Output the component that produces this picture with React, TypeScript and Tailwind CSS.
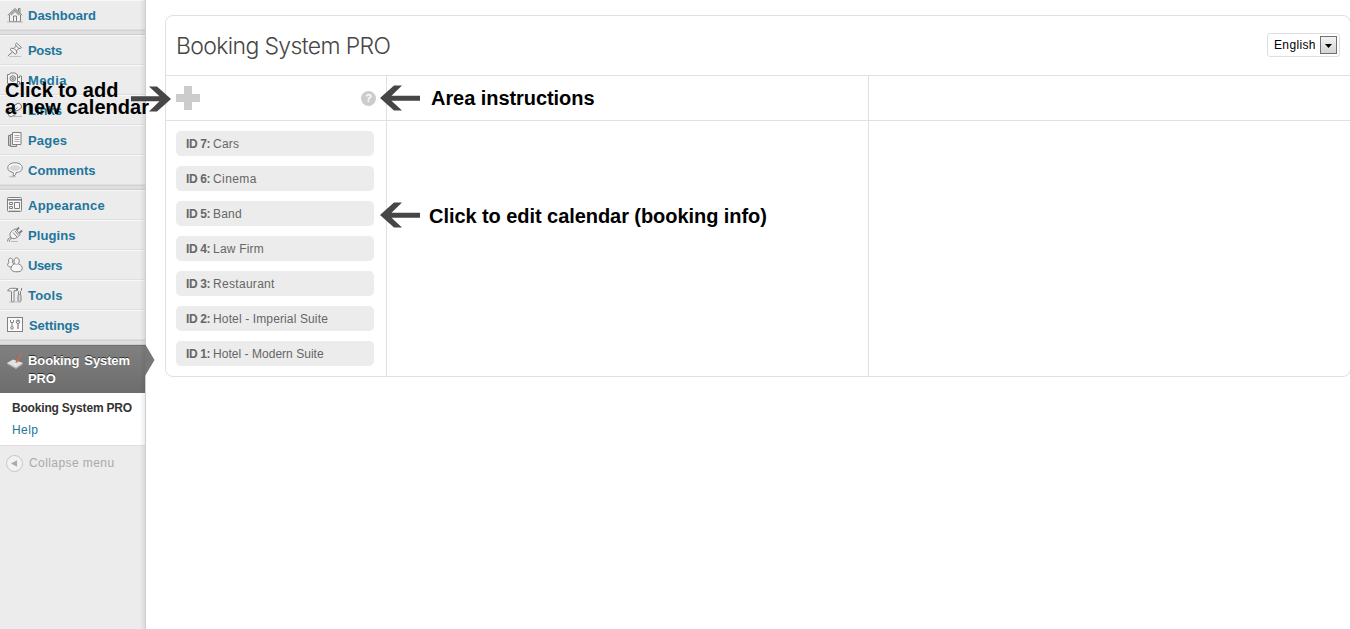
import React from "react";

type IconName =
  | "home" | "pin" | "media" | "links" | "pages" | "comments"
  | "appearance" | "plugins" | "users" | "tools" | "settings";

const icons: Record<IconName, React.ReactNode> = {
  home: (
    <>
      <path d="M2.5 8v6.5h11V8L8 2.8z" fill="#f4f4f4" />
      <path d="M.8 8.3 8 1.5l7.2 6.8M11.5 4V1.500h1.500V6M2.5 8v6.5h11V8M6.500 14V9h3v5M4 8.300l4-3.800 4 3.800" />
      <path d="M0 15h16" stroke="#bbb" />
    </>
  ),
  pin: (
    <>
      <path d="m9.500 1 5 4.500-1.500 1-1.200-.3-2.300 2.600.3 2.200-1.500 1.200L3 7.500l1.500-1.200 2.300.2L9.200 4 8.500 2.500z" fill="#f4f4f4" />
      <path d="m9.200 4 2.600 2.200M6.800 6.500l2.700 2.300M5.500 10 .8 14" />
      <path d="M2 14.500h12" stroke="#c4c4c4" />
    </>
  ),
  media: (
    <>
      <path d="M.5 2.500h2l1-1.500h5l1 1.500h1v9H.5zM10.500 5.500h2V4h2v8h-2V9.500h-2" fill="#f4f4f4" />
      <circle cx="5.800" cy="6.500" r="2.800" fill="#ddd" />
      <circle cx="5.800" cy="6.500" r="1" />
      <path d="M1 12.500h14" stroke="#bbb" />
    </>
  ),
  links: (
    <>
      <rect x="6.500" y="2" width="8" height="6" rx="3" transform="rotate(-35 10.500 5)" fill="#f4f4f4" />
      <rect x="1" y="8" width="8" height="6" rx="3" transform="rotate(-35 5 11)" fill="#f4f4f4" />
      <path d="m5 10.500 5.500-5" />
      <path d="M5 14.500h10" stroke="#bbb" />
    </>
  ),
  pages: (
    <>
      <path d="M1.500 3.500h5v10h-5z" fill="#ccc" />
      <path d="M3.500 2.500h6v12h-6z" fill="#ddd" />
      <path d="M5.500.500h8.500v12H5.500z" fill="#f8f8f8" />
      <path d="M7.500 3.500h5M7.500 5.500h5M7.500 7.500h5M7.500 9.500h5" stroke="#aaa" />
    </>
  ),
  comments: (
    <>
      <path d="M8 .8c4.200 0 7.200 1.900 7.200 5s-2.700 4.500-6.200 4.700c0 1.900-1 3.300-3.500 4 .9-1.200 1.200-2.500.8-4C3 10 .8 8.500.8 5.800c0-3.100 3-5 7.200-5z" fill="#fafafa" />
      <ellipse cx="8" cy="6" rx="5.500" ry="3" fill="#d8d8d8" stroke="none" />
      <path d="M2 14.800h7" stroke="#bbb" />
    </>
  ),
  appearance: (
    <>
      <rect x=".5" y=".5" width="14" height="14" rx="1" fill="#f6f6f6" />
      <path d="M1 2.800h13" strokeWidth="1.600" />
      <path d="M2.500 5.500h3v2h-3zM2.500 9.500h3v2h-3zM7.500 5.500h5v6h-5z" />
      <path d="M2 13.500h11" stroke="#ccc" />
    </>
  ),
  plugins: (
    <>
      <path d="M6.500 3C3.500 4.500 2.200 7 3.500 10c1.700 2.500 5.500 2 7.800-.5L13 7.500 8.300 1.800z" fill="#f4f4f4" />
      <path d="M3.500 10.500c-2 .5-3 2-2.800 4M4.700 11.500c-1.500.3-2.300 1.500-2.200 3M6 5.500l4 4.500M8 4l3.500 4.300" />
      <path d="m9.500 3 2.500-2.500M12.200 6l3-2.500" strokeWidth="1.800" />
      <path d="M4 14.500h7" stroke="#bbb" />
    </>
  ),
  users: (
    <>
      <path d="M3.500 1c2 0 3 2.500 1.800 4.500C8 7 7 10 4.500 10 1.500 10 0 8.500.8 7c.2-.8.700-1.200 1.200-1.500C1 3.500 1.700 1 3.500 1z" fill="#f4f4f4" />
      <path d="M9.500.8c2.800 0 3.500 3.500 1.800 6 2.700 1 4.200 3 3.900 5-.4 2.300-2.700 3-5.200 3-3.500 0-6-1-6-3.200C4 9.500 5.500 7.500 7.800 6.800 6.300 4.500 7 .8 9.500.8z" fill="#f6f6f6" />
      <path d="M7.800 6.800c1 .8 2.500.8 3.500 0" stroke="#aaa" />
    </>
  ),
  tools: (
    <>
      <path d="M.7 4c.5-2 2-2.700 4-2.700h4.800v2.400H7v11H4.500V4.500C3 3.500 1.700 4 .7 4z" fill="#f4f4f4" />
      <path d="M10.500 1v2.500l1 1V7.500M14.500 1v2.500l-1 1V7.500" fill="none" />
      <rect x="11" y="7.500" width="3" height="7" rx="1.200" fill="#ddd" />
      <path d="M2 15h12" stroke="#bbb" />
    </>
  ),
  settings: (
    <>
      <rect x=".5" y=".5" width="15" height="14" fill="#fafafa" />
      <path d="M3.500 3v2M6.500 3v2M3.500 5.500h3M5 5.500V9" />
      <circle cx="5" cy="10.800" r="1.300" />
      <circle cx="11" cy="4.800" r="1.800" />
      <path d="M11 6.800V12M11 3v2" strokeWidth="1.300" />
    </>
  ),
};

function Icon({ name }: { name: IconName }) {
  return (
    <svg width="16" height="16" viewBox="0 0 16 16" fill="none" stroke="#808080" strokeWidth="1" className="shrink-0">
      {icons[name]}
    </svg>
  );
}

type Entry = { icon: IconName; label: string; text: string };

const groups: Entry[][] = [
  [{ icon: "home", label: "Dashboard", text: "tracking-[0px]" }],
  [
    { icon: "pin", label: "Posts", text: "tracking-[-0.3px]" },
    { icon: "media", label: "Media", text: "tracking-[0.4px]" },
    { icon: "links", label: "Links", text: "tracking-[0px]" },
    { icon: "pages", label: "Pages", text: "tracking-[0.2px]" },
    { icon: "comments", label: "Comments", text: "tracking-[0.05px]" },
  ],
  [
    { icon: "appearance", label: "Appearance", text: "tracking-[0.25px]" },
    { icon: "plugins", label: "Plugins", text: "tracking-[0.1px]" },
    { icon: "users", label: "Users", text: "tracking-[-0.4px]" },
    { icon: "tools", label: "Tools", text: "tracking-[0.2px]" },
    { icon: "settings", label: "Settings", text: "tracking-[-0.1px] pl-px" },
  ],
];

function Sidebar() {
  return (
    <aside className="relative flex w-[146px] shrink-0 flex-col border-r border-[#cfcfcf] bg-[#ececec]">
      {groups.map((group, i) => (
        <div key={i}>
          {group.map((entry) => (
            <div
              key={entry.label}
              className="flex h-[30px] items-center gap-[5px] border-t border-b border-t-[#f9f9f9] border-b-[#dfdfdf] pl-[7px]"
            >
              <Icon name={entry.icon} />
              <span className={`pt-[2px] text-[13px] leading-[18px] font-bold text-[#21759b] ${entry.text}`}>{entry.label}</span>
            </div>
          ))}
          <div className="h-[5px] border-t border-b border-t-[#d2d2d2] border-b-[#cdcdcd] bg-[#dfdfdf]" />
        </div>
      ))}
      <div className="flex h-12 border-t border-[#707070] bg-linear-to-b from-[#808080] to-[#6d6d6d] pt-[6px] pl-[7px]">
        <svg width="16" height="18" viewBox="0 0 16 18" className="mt-px shrink-0">
          <path d="M0 10 6 6.500l10 3.500-7 5z" fill="#e2e2e2" />
          <path d="m0 10 9 4.500 7-4.500v1L9 16 0 11z" fill="#b5b5b5" />
          <path d="m9 10 5.500-9" stroke="#c9694c" strokeWidth="1.700" />
          <path d="m8.300 11.300 1-1.700" stroke="#fff" />
        </svg>
        <span className="ml-[5px] w-[114px] text-[13px] leading-[18px] font-bold tracking-[-0.1px] text-white [text-shadow:0_-1px_0_#333] [word-spacing:1.5px]">
          Booking System<br />PRO
        </span>
      </div>
      <div className="flex h-[53px] flex-col border-b border-[#dfdfdf] bg-white pt-1 pl-3 text-[12px] leading-[22px]">
        <span className="font-bold whitespace-nowrap text-[#333] tracking-[-0.19px]">Booking System PRO</span>
        <span className="text-[#21759b] tracking-[0.4px]">Help</span>
      </div>
      <div className="flex h-[34px] items-center gap-[6px] pl-[6px]">
        <svg width="17" height="17" viewBox="0 0 17 17">
          <circle cx="8.500" cy="8.500" r="8" fill="#f2f2f2" stroke="#c5c5c5" />
          <path d="M11 5.200v6.600L5 8.500z" fill="#aaa" />
        </svg>
        <span className="text-[12px] tracking-[0.42px] text-[#aaa]">Collapse menu</span>
      </div>
      <div className="absolute inset-y-0 right-0 w-[5px] bg-linear-to-r from-transparent to-black/8" />
      <svg width="11" height="32" viewBox="0 0 11 32" className="absolute top-[344px] left-[145px]">
        <path d="M0 0 9.500 16 0 32z" fill="#777" />
      </svg>
    </aside>
  );
}

const calendars = [
  { id: 7, name: "Cars", text: "tracking-[0.2px]" },
  { id: 6, name: "Cinema", text: "tracking-[0.4px]" },
  { id: 5, name: "Band", text: "tracking-[0.2px]" },
  { id: 4, name: "Law Firm", text: "tracking-[0.2px]" },
  { id: 3, name: "Restaurant", text: "tracking-[0.3px]" },
  { id: 2, name: "Hotel - Imperial Suite", text: "tracking-[0.13px]" },
  { id: 1, name: "Hotel - Modern Suite", text: "tracking-[0.03px]" },
];

function Panel() {
  return (
    <main className="mt-[15px] ml-[19px] flex h-[362px] w-[1186px] shrink-0 flex-col rounded-lg border border-[#e0e0e0] bg-white">
      <header className="flex h-[60px] shrink-0 items-center justify-between border-b border-[#e0e0e0] px-[10px]">
        <h1 className="pt-[2px] font-['Inter'] text-[23px] font-light tracking-[-0.64px] text-[#464646]">Booking System PRO</h1>
        <div className="mb-[2px] flex h-6 w-[73px] items-center justify-between rounded-[3px] border border-[#dfdfdf] pr-[2px] pl-[6px] text-[12px] text-black">
          <span className="tracking-[0.35px]">English</span>
          <span className="flex h-[18px] w-[17px] items-center justify-center border border-[#707070] bg-linear-to-b from-[#f3f3f3] to-[#d4d4d4]">
            <svg width="7" height="4" viewBox="0 0 7 4" className="mt-[2px]"><path d="M0 0h7L3.500 4z" fill="#000" /></svg>
          </span>
        </div>
      </header>
      <div className="flex flex-1">
        <section className="flex w-[221px] flex-col border-r border-[#e0e0e0]">
          <div className="flex h-[45px] items-center justify-between border-b border-[#e0e0e0] px-[10px]">
            <svg width="24" height="24" viewBox="0 0 24 24"><path d="M8 0h8v8h8v8h-8v8H8v-8H0V8h8z" fill="#ccc" /></svg>
            <span className="flex size-[15px] items-center justify-center rounded-full bg-[#ccc] text-[11px] leading-none font-bold text-white">?</span>
          </div>
          <ul className="flex flex-col gap-[10px] p-[10px]">
            {calendars.map(({ id, name, text }) => (
              <li key={id} className="flex h-[25px] w-[198px] items-center gap-[3px] rounded-[5px] bg-[#ececec] pl-[10px] text-[12px] whitespace-nowrap text-[#666]">
                <b className="tracking-[-0.4px]">ID {id}:</b>
                <span className={text}>{name}</span>
              </li>
            ))}
          </ul>
        </section>
        <section className="w-[482px] border-r border-[#e0e0e0]"><div className="h-[45px] border-b border-[#e0e0e0]" /></section>
        <section className="flex-1"><div className="h-[45px] border-b border-[#e0e0e0]" /></section>
      </div>
    </main>
  );
}

function Arrow({ className }: { className: string }) {
  return (
    <svg width="40" height="26" viewBox="0 0 40 26" className={className}>
      <path d="M0 13 14 .5h8L11.500 10.700H40v5H11.500L22 25.500h-8z" fill="#464646" />
    </svg>
  );
}

export default function App() {
  return (
    <div className="relative flex h-[629px] w-full overflow-hidden bg-white font-['Liberation_Sans',Arial,sans-serif]">
      <Sidebar />
      <Panel />
      <div className="absolute top-[82px] left-[5px] text-[20px] leading-[17px] font-bold whitespace-nowrap text-black">
        <div className="tracking-[0px]">Click to add</div>
        <div className="tracking-[0.05px]">a new calendar</div>
      </div>
      <Arrow className="absolute top-[86px] left-[131px] rotate-180" />
      <Arrow className="absolute top-[85px] left-[380px]" />
      <div className="absolute top-[86px] left-[431px] text-[20px] leading-6 font-bold tracking-[-0.06px] whitespace-nowrap text-black">Area instructions</div>
      <Arrow className="absolute top-[202px] left-[380px]" />
      <div className="absolute top-[204px] left-[429px] text-[20px] leading-6 font-bold tracking-[-0.06px] whitespace-nowrap text-black">Click to edit calendar (booking info)</div>
    </div>
  );
}
